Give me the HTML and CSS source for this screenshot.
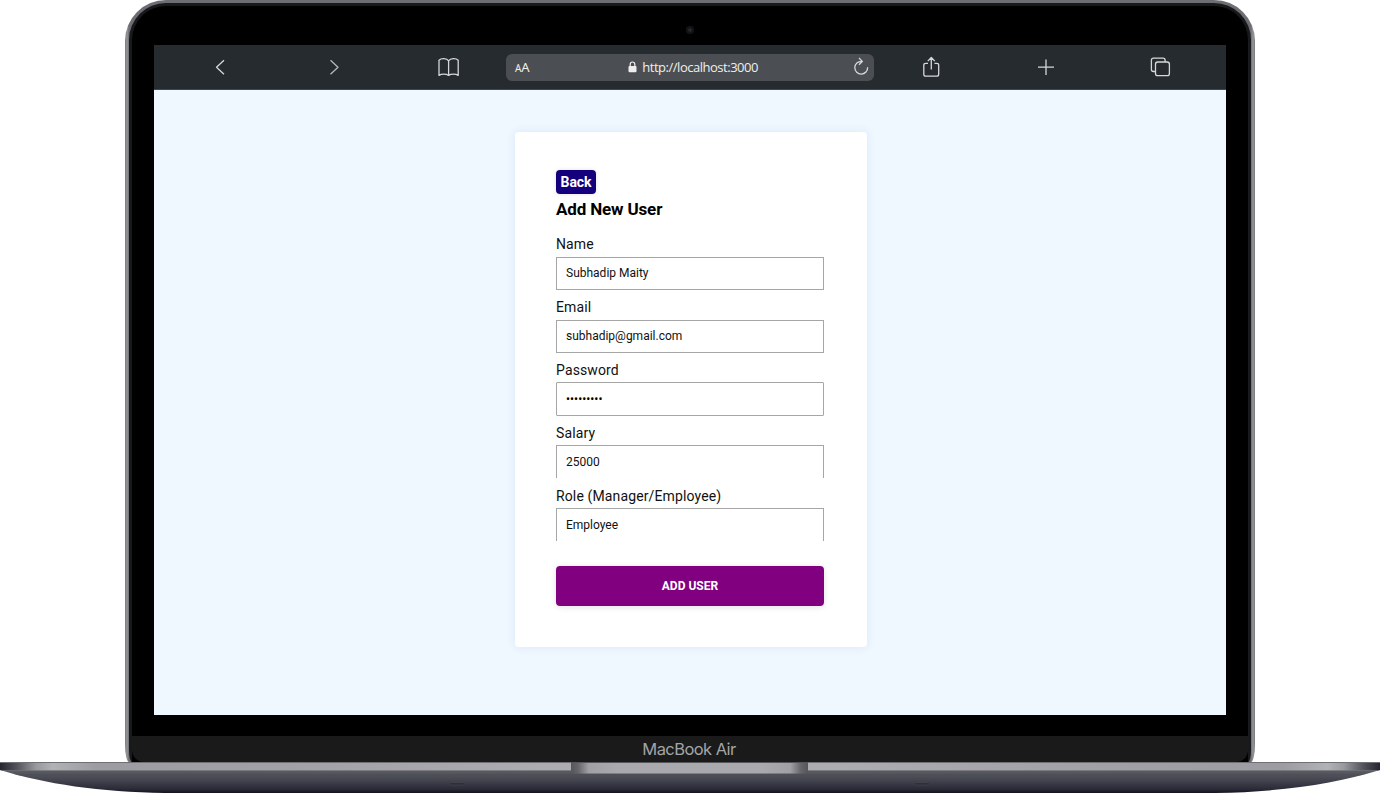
FILE: index.html
```html
<!DOCTYPE html>
<html lang="en">
<head>
<meta charset="utf-8">
<title>Add New User</title>
<link rel="stylesheet" href="styles.css">
</head>
<body>
<div class="laptop">
  <div class="lid">
    <div class="bezel">
      <div class="camera-row"><span class="camera"></span></div>
      <div class="screen">
        <header class="toolbar">
          <div class="tools">
            <svg class="icon" viewBox="0 0 24 24"><path d="M16 5.2 8.5 12.2 16 19.2"/></svg>
            <svg class="icon dim" viewBox="0 0 24 24"><path d="M8.5 5.2 16 12.2 8.5 19.2"/></svg>
            <svg class="icon" viewBox="0 0 24 24"><path d="M11.6 5.8C9.8 3.1 4.1 3.1 2 5.3V20.4C4.3 18.6 9.3 18.6 11.6 20.4C13.9 18.6 18.9 18.6 21.2 20.4V5.3C19.1 3.1 13.4 3.1 11.6 5.8V20.4"/></svg>
          </div>
          <div class="address">
            <span class="reader"><small>A</small>A</span>
            <span class="url"><svg class="lock" viewBox="0 0 9 12"><path d="M2.2 6V3.6a2.3 2.6 0 0 1 4.6 0V6" fill="none" stroke="#eee" stroke-width="1.2"/><rect x=".5" y="5" width="8" height="6.2" rx="1" fill="#eee"/></svg>http://localhost:3000</span>
            <svg class="reload" viewBox="0 0 18 20"><path d="M9.6 4.3A6.4 6.4 0 1 0 15.6 10.3M7 1 10.3 4.4 7 7.8"/></svg>
          </div>
          <div class="tools">
            <svg class="icon" viewBox="0 0 24 24"><path d="M9 8.3H6.7Q4.8 8.3 4.8 10.2V19.3Q4.8 21.2 6.7 21.2H17.8Q19.7 21.2 19.7 19.3V10.2Q19.7 8.3 17.8 8.3H15.5M12.3 14.5V2.7M8.8 6.1 12.3 2.5 15.8 6.1"/></svg>
            <svg class="icon" viewBox="0 0 24 24"><path d="M4 12.2H20M12 4.4V20"/></svg>
            <svg class="icon" viewBox="0 0 24 24"><path d="M7 16.5H5.5Q3.4 16.5 3.4 14.4V5.3Q3.4 3.2 5.5 3.2H15Q17.1 3.2 17.1 5.3V7"/><rect x="7.5" y="7" width="13.9" height="13.6" rx="2.2"/></svg>
          </div>
        </header>
        <main class="page">
          <form class="card">
            <button class="back" type="button">Back</button>
            <h1 class="title">Add New User</h1>
            <div class="field"><label class="label">Name</label><div class="input">Subhadip Maity</div></div>
            <div class="field"><label class="label">Email</label><div class="input">subhadip@gmail.com</div></div>
            <div class="field"><label class="label">Password</label><div class="input tall"><span class="dots">•••••••••</span></div></div>
            <div class="field"><label class="label">Salary</label><div class="input open">25000</div></div>
            <div class="field"><label class="label">Role (Manager/Employee)</label><div class="input open">Employee</div></div>
            <button class="submit" type="button">ADD USER</button>
          </form>
        </main>
      </div>
      <div class="chin">MacBook Air</div>
    </div>
  </div>
  <svg class="base" viewBox="0 0 1380 31">
    <defs>
      <linearGradient id="under" x1="0" y1="0" x2="0" y2="1">
        <stop offset="0" stop-color="#57585f"/><stop offset=".3" stop-color="#595a62"/><stop offset=".6" stop-color="#42434d"/><stop offset=".88" stop-color="#292a36"/><stop offset="1" stop-color="#11121e"/>
      </linearGradient>
      <linearGradient id="edge">
        <stop offset="0" stop-color="#242530"/><stop offset=".012" stop-color="#52535b"/><stop offset=".026" stop-color="#98999e"/><stop offset=".038" stop-color="#b1b2b6"/><stop offset=".07" stop-color="#9c9ca2"/><stop offset=".2" stop-color="#a0a0a6"/><stop offset=".4" stop-color="#acacb1"/><stop offset=".6" stop-color="#acacb1"/><stop offset=".8" stop-color="#a0a0a6"/><stop offset=".93" stop-color="#9c9ca2"/><stop offset=".962" stop-color="#b1b2b6"/><stop offset=".974" stop-color="#98999e"/><stop offset=".988" stop-color="#52535b"/><stop offset="1" stop-color="#242530"/>
      </linearGradient>
      <linearGradient id="notch">
        <stop offset="0" stop-color="#55555a"/><stop offset=".03" stop-color="#65656a"/><stop offset=".075" stop-color="#a0a0a5"/><stop offset=".2" stop-color="#a9a9ae"/><stop offset=".8" stop-color="#a9a9ae"/><stop offset=".925" stop-color="#a0a0a5"/><stop offset=".97" stop-color="#65656a"/><stop offset="1" stop-color="#55555a"/>
      </linearGradient>
      <clipPath id="hull"><path d="M0 0H1380V8C1335 22 1280 30 1215 31H165C100 30 45 22 0 8Z"/></clipPath>
    </defs>
    <g clip-path="url(#hull)">
      <rect width="1380" height="31" fill="url(#under)"/>
      <rect width="1380" height="8.5" fill="url(#edge)"/>
      <rect width="1380" height="1" fill="#6f6f74"/>
      <rect y="8" width="1380" height="1" fill="#77777d" opacity=".6"/>
      <rect y="12.5" width="1380" height="1" fill="#4d4e55"/>
    </g>
    <path d="M571 0H808V8Q808 11.5 804 11.5H575Q571 11.5 571 8Z" fill="url(#notch)"/>
    <rect x="571" width="237" height="1" fill="#55555a"/>
    <g fill="#292a33" stroke="#565760" stroke-width=".5" opacity=".7"><rect x="449.5" y="20.5" width="15" height="2.5" rx="1.2"/><rect x="914.5" y="20.5" width="15" height="2.5" rx="1.2"/></g>
  </svg>
</div>
</body>
</html>
```
FILE: styles.css
```css
* { box-sizing: border-box; }
body { margin: 0; background: #fff; font-family: Roboto, sans-serif; overflow: hidden; }
.laptop { width: 1380px; height: 793px; display: flex; flex-direction: column; align-items: center; }
.lid {
  width: 1130px; height: 762px; padding: 3px 4px 0;
  background: linear-gradient(90deg, #77787c, #96979b 2px, #6d6e74 4px, #6d6e74 1126px, #96979b 1128px, #77787c);
  border-radius: 41px 41px 4px 4px / 41px 41px 18px 18px;
}
.bezel {
  width: 1122px; height: 759px; background: #000;
  border: 3px solid #18191a; border-bottom: 0;
  border-radius: 37px 37px 3px 3px / 37px 37px 12px 12px;
  display: flex; flex-direction: column; align-items: center; overflow: hidden;
}
.camera-row { height: 39px; flex: none; padding-top: 19.5px; }
.camera { display: block; width: 8px; height: 8px; border-radius: 50%; background: radial-gradient(#26292e 15%, #111214 45%, #1a1a1c); }
.screen { width: 1072px; height: 669.6px; flex: none; display: flex; flex-direction: column; }
.toolbar {
  height: 45px; padding: 0 54px; flex: none; background: #262b2f; border-bottom: 1px solid #43474b;
  display: flex; align-items: center; justify-content: space-between;
}
.tools { display: flex; gap: 90.4px; }
.icon { width: 24px; height: 24px; fill: none; stroke: #d6d7d8; stroke-width: 1.3; stroke-linejoin: round; }
.dim { stroke: #b5b7b9; }
.address {
  width: 368px; height: 27px; padding: 0 4px 0 9px; border-radius: 6px; background: #4b4e52; color: #eee;
  display: flex; align-items: center; justify-content: space-between;
  font-family: "Open Sans", sans-serif; font-size: 13px;
}
.reader { font-family: "Noto Sans", sans-serif; letter-spacing: -.2px; }
.reader small { font-size: 10px; }
.url { display: flex; align-items: center; gap: 5.5px; margin-left: 4.5px; letter-spacing: -.48px; }
.lock { width: 9px; height: 12px; }
.reload { width: 18px; height: 20px; fill: none; stroke: #d6d7d8; stroke-width: 1.3; }
.page { flex: 1; background: #eff7ff; padding-top: 42px; display: flex; justify-content: center; align-items: flex-start; }
.card {
  width: 352px; height: 515px; margin-left: 1px; padding: 37.5px 42px 0 41.5px; background: #fff; border-radius: 4px;
  box-shadow: 0 0 8px rgba(80, 140, 190, .13); display: flex; flex-direction: column; align-items: flex-start;
}
.back {
  width: 40px; height: 24.5px; padding: 0; border: 0; border-radius: 4px; background: #14007c; color: #fff;
  font: 700 14px/25px Roboto, sans-serif; letter-spacing: -.1px; box-shadow: 0 0 4px rgba(0, 0, 0, .12);
}
.title { margin: 5px 0 14px; font-size: 17px; line-height: 20px; font-weight: 700; color: #000; letter-spacing: -.15px; }
.field { height: 63px; width: 268px; }
.label { display: block; height: 24px; font-size: 14px; line-height: 22px; color: #111; letter-spacing: .13px; }
.input { height: 33px; padding-left: 9px; border: 1px solid #a6a6a6; font-size: 12px; line-height: 30px; color: #111; }
.tall { height: 34px; margin-top: -1px; border-radius: 1px; line-height: 32px; color: #000; }
.open { margin-top: -1px; border-bottom: 0; line-height: 32px; }
.submit {
  width: 268px; height: 39.5px; margin-top: 18px; padding: 0; border: 0; border-radius: 4px; background: #800080; color: #fff;
  font: 700 12px/40px Roboto, sans-serif; box-shadow: 0 1px 6px rgba(0, 0, 0, .12);
}
.chin {
  width: 1116px; height: 26px; margin-top: 21.4px; padding-right: 2px; flex: none; background: #1a1a1a; color: #a3a4a8;
  border-radius: 0 0 12px 12px; text-align: center; font: 400 16.5px/27px Inter, sans-serif; letter-spacing: -.57px;
}
.base { display: block; width: 1380px; height: 31px; flex: none; }
```
